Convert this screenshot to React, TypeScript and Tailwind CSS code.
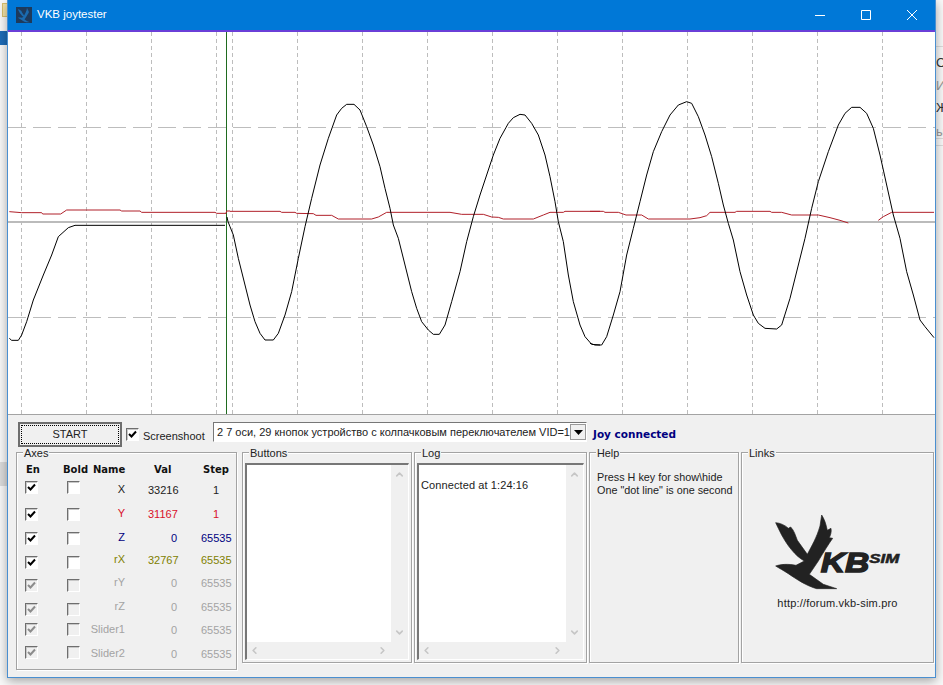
import { ChevronDown, ChevronLeft, ChevronRight, ChevronUp } from "lucide-react";
import type { ReactNode } from "react";

// points are read off 3x crops, so they carry the crop origin
const pts = (ox: number, oy: number, list: number[][]) =>
  list.map(([x, y]) => `${ox + x / 3},${oy + y / 3}`).join(" ");

const blackA = pts(0, 190, [[28, 445], [35, 451], [55, 451], [65, 435], [80, 395], [100, 330], [130, 255], [155, 195], [175, 140], [205, 113], [225, 106], [675, 106]]);
const blackB = pts(230, 95, [[-9, 366], [-6, 380], [0, 395], [10, 420], [25, 490], [45, 570], [60, 630], [75, 680], [90, 715], [105, 735], [130, 735], [145, 715], [165, 660], [185, 590], [205, 490], [225, 395], [245, 310], [270, 210], [295, 130], [320, 60], [335, 40], [350, 28], [372, 28], [390, 45], [410, 95], [430, 150], [450, 215], [465, 280], [480, 340], [490, 390], [505, 430], [525, 510], [545, 590], [560, 640], [575, 680], [595, 705], [610, 718], [628, 718], [645, 690], [665, 620], [690, 530], [710, 440], [730, 365], [750, 300], [770, 240], [790, 180], [810, 130], [835, 85], [850, 68], [870, 58], [885, 60], [905, 85], [925, 120], [945, 180], [960, 245], [975, 320], [985, 380], [1000, 440], [1015, 540], [1030, 620], [1050, 690], [1065, 725], [1085, 748], [1110, 750]]);
const blackC = pts(590, 95, [[0, 745], [15, 750], [35, 750], [50, 725], [70, 660], [90, 590], [110, 480], [130, 400], [150, 320], [170, 240], [190, 170], [215, 110], [240, 60], [265, 30], [290, 20], [305, 25], [325, 65], [345, 120], [365, 185], [385, 265], [400, 330], [415, 385], [430, 435], [450, 530], [470, 600], [490, 660], [505, 685], [525, 700], [560, 702], [575, 690], [600, 610], [625, 510], [645, 430], [665, 340], [685, 260], [715, 170], [745, 90], [765, 55], [785, 37], [810, 37], [830, 55], [850, 100], [870, 180], [890, 270], [910, 360], [930, 430], [950, 530], [970, 600], [990, 675], [1005, 695], [1032, 728]]);

const redA = pts(0, 190, [[28, 65], [65, 68], [125, 68], [128, 72], [182, 72], [200, 60], [360, 60], [365, 63], [420, 63], [425, 67], [645, 67], [650, 70], [678, 70], [680, 63], [690, 63]]);
const redB = pts(230, 95, [[0, 349], [150, 349], [155, 352], [195, 352], [200, 355], [250, 356], [258, 361], [305, 361], [325, 372], [425, 372], [445, 366], [470, 352], [660, 352], [695, 358], [760, 358], [785, 366], [805, 367], [820, 372], [910, 372], [940, 360], [960, 352], [1000, 352], [1005, 349], [1110, 349]]);
const redC = pts(590, 95, [[0, 349], [40, 349], [45, 352], [85, 352], [108, 360], [155, 360], [175, 372], [300, 372], [330, 368], [350, 362], [360, 352], [435, 352], [440, 349], [540, 349], [545, 352], [575, 352], [605, 360], [685, 360], [720, 368], [750, 376], [775, 384]]);
const redD = pts(590, 95, [[865, 376], [880, 365], [905, 352], [1032, 352]]);

const gridX = [21, 86, 151, 216, 232, 297, 362, 427, 492, 557, 622, 687, 752, 817, 882];

const birdPath =
  "M17,35 C30,36 45,42 55,52 L62,48 C72,58 76,72 82,88 L112,130 C125,105 140,80 150,45 L155,12 C160,20 165,30 168,42 L172,58 L183,52 C185,62 182,72 178,80 L188,82 C175,100 160,125 145,150 L118,190 L160,220 L200,233 L140,233 C110,225 80,205 55,188 C40,178 28,172 17,165 C30,160 55,158 78,163 L103,150 C75,135 50,100 35,72 C28,58 22,46 17,35 Z";

const Chart = () => (
  <svg className="block h-[382px] w-[927px] shrink-0 bg-white" viewBox="8 32 927 382" fill="none">
    {gridX.map((x) => (
      <line key={x} x1={x + 0.5} x2={x + 0.5} y1={32} y2={414} stroke="#bdbdbd" strokeDasharray="4 3" />
    ))}
    <line x1={8} x2={935} y1={127.5} y2={127.5} stroke="#bdbdbd" strokeDasharray="18 7" />
    <line x1={8} x2={935} y1={317.5} y2={317.5} stroke="#bdbdbd" strokeDasharray="18 7" />
    <line x1={8} x2={935} y1={222} y2={222} stroke="#bbb" strokeWidth={2} />
    <line x1={226.5} x2={226.5} y1={32} y2={414} stroke="#1f6b1f" />
    <polyline points={redA} stroke="#b0202a" />
    <polyline points={redB} stroke="#b0202a" />
    <polyline points={redC} stroke="#b0202a" />
    <polyline points={redD} stroke="#b0202a" />
    <polyline points={blackA} stroke="#000" strokeLinejoin="round" />
    <polyline points={blackB} stroke="#000" strokeLinejoin="round" />
    <polyline points={blackC} stroke="#000" strokeLinejoin="round" />
  </svg>
);

const Check = ({ on = false, dim = false }: { on?: boolean; dim?: boolean }) => (
  <span
    className={`block h-[13px] w-[13px] border border-t-[#6e6e6e] border-l-[#6e6e6e] border-r-white border-b-white shadow-[inset_1px_1px_0_#c8c8c8] ${dim ? "bg-[#f0f0f0]" : "bg-white"}`}
  >
    {on && (
      <svg viewBox="0 0 11 11" className="h-[11px] w-[11px]" fill="none">
        <path d="M2 5 L4.5 7.5 L9 2.5" stroke={dim ? "#8c8c8c" : "#000"} strokeWidth={2} />
      </svg>
    )}
  </span>
);

const Group = ({ title, className, children }: { title: string; className: string; children?: ReactNode }) => (
  <div className={`relative shrink-0 border border-[#a3a3a3] shadow-[inset_1px_1px_0_#fff,1px_1px_0_#fff] ${className}`}>
    <span className="absolute -top-[5px] left-[6px] bg-[#f0f0f0] px-px leading-[11px]">{title}</span>
    {children}
  </div>
);

const ListBox = ({ children }: { children?: ReactNode }) => (
  <div className="mx-[2px] mt-[10px] flex h-[197px] flex-col border-t-2 border-l-2 border-t-[#777] border-l-[#777] border-r border-b border-r-white border-b-white">
    <div className="flex min-h-0 flex-1">
      <div className="flex-1 bg-white pt-[12px] pl-[2px] tracking-[0.1px]">{children}</div>
      <div className="flex w-[17px] flex-col items-center justify-between py-[4px] text-[#c6c6c6]">
        <ChevronUp size={11} strokeWidth={3.5} />
        <ChevronDown size={11} strokeWidth={3.5} />
      </div>
    </div>
    <div className="flex h-[17px] items-center justify-between pr-[20px] pl-[2px] text-[#c6c6c6]">
      <ChevronLeft size={11} strokeWidth={3.5} />
      <ChevronRight size={11} strokeWidth={3.5} />
    </div>
  </div>
);

type Axis = { name: string; val: string; step: string; color: string; dim: boolean; row: string; box: string };

const axes: Axis[] = [
  { name: "X", val: "33216", step: "1", color: "text-[#222]", dim: false, row: "", box: "-translate-y-[3px]" },
  { name: "Y", val: "31167", step: "1", color: "text-[#d8102a]", dim: false, row: "mt-px", box: "" },
  { name: "Z", val: "0", step: "65535", color: "text-[#000080]", dim: false, row: "mt-px", box: "" },
  { name: "rX", val: "32767", step: "65535", color: "text-[#808000]", dim: false, row: "-mt-px", box: "translate-y-[2px]" },
  { name: "rY", val: "0", step: "65535", color: "text-[#a3a3a3]", dim: true, row: "", box: "translate-y-[2px]" },
  { name: "rZ", val: "0", step: "65535", color: "text-[#a3a3a3]", dim: true, row: "mt-px", box: "translate-y-[2px]" },
  { name: "Slider1", val: "0", step: "65535", color: "text-[#a3a3a3]", dim: true, row: "", box: "-translate-y-px" },
  { name: "Slider2", val: "0", step: "65535", color: "text-[#a3a3a3]", dim: true, row: "mt-px", box: "-translate-y-[2px]" },
];

const AxesBox = () => (
  <Group title="Axes" className="h-[218px] w-[221px] pt-[9px]">
    <div className="flex h-[14px] items-center font-['DejaVu_Sans'] text-[10px] font-bold text-[#111]">
      <span className="ml-[9px] w-[20px]">En</span>
      <span className="ml-[17px] w-[30px]">Bold</span>
      <span className="ml-[0px] w-[33px]">Name</span>
      <span className="ml-[28px] w-[23px]">Val</span>
      <span className="ml-[26px] w-[30px]">Step</span>
    </div>
    <div className="mt-[3px]">
      {axes.map((a) => (
        <div key={a.name} className={`flex h-[23px] items-center whitespace-nowrap ${a.color} ${a.row}`}>
          <span className={`flex w-[28px] justify-center ${a.box}`}><Check on dim={a.dim} /></span>
          <span className={`ml-[14px] flex w-[28px] justify-center ${a.box}`}><Check dim={a.dim} /></span>
          <span className="ml-[4px] flex w-[34px] justify-end -translate-y-px">{a.name}</span>
          <span className="ml-[23px] w-[29px] text-right">{a.val}</span>
          <span className="ml-[24px] w-[30px] text-center">{a.step}</span>
        </div>
      ))}
    </div>
  </Group>
);

const Logo = () => (
  <svg viewBox="0 0 405 255" className="h-[85px] w-[135px] shrink-0">
    <path d={birdPath} fill="#222" stroke="#222" strokeWidth={2} />
    <text x={152} y={183} fill="#222" stroke="#222" strokeWidth={4} fontFamily="Liberation Sans" fontWeight={700} fontStyle="italic" fontSize={82} textLength={146} lengthAdjust="spacingAndGlyphs">KB</text>
    <text x={298} y={155} fill="#222" stroke="#222" strokeWidth={1.5} fontFamily="Liberation Sans" fontWeight={700} fontStyle="italic" fontSize={36} textLength={90} lengthAdjust="spacingAndGlyphs">SIM</text>
  </svg>
);

const TitleBar = () => (
  <div className="flex h-[30px] shrink-0 items-center bg-[#0078d7] text-white">
    <svg viewBox="0 0 220 245" className="mr-[5px] ml-[8px] h-[16px] w-[16px] shrink-0 bg-[#1d3a5c]">
      <path d={birdPath} fill="#1a6bb0" />
    </svg>
    <span className="text-[11.5px]">VKB joytester</span>
    <div className="ml-auto flex">
      <span className="flex h-[30px] w-[46px] items-center justify-center">
        <svg viewBox="0 0 10 10" className="h-[10px] w-[10px]" stroke="#fff" fill="none"><path d="M0 5.5H10" /></svg>
      </span>
      <span className="flex h-[30px] w-[46px] items-center justify-center">
        <svg viewBox="0 0 10 10" className="h-[10px] w-[10px]" stroke="#fff" fill="none"><path d="M.5 .5H9.5V9.5H.5Z" /></svg>
      </span>
      <span className="flex h-[30px] w-[46px] items-center justify-center">
        <svg viewBox="0 0 10 10" className="h-[10px] w-[10px]" stroke="#fff" fill="none"><path d="M0 0L10 10M10 0L0 10" /></svg>
      </span>
    </div>
  </div>
);

const Backdrop = () => (
  <>
    <div className="absolute top-[3px] left-[2px] h-[14px] w-[6px] border border-[#d8c070] bg-[#f3e3a8]" />
    <div className="absolute top-[31px] left-0 h-[14px] w-[8px] bg-[#1e6cb8]" />
    <div className="absolute top-[462px] left-0 h-[24px] w-[8px] bg-[#dcdcdc]" />
    <div className="absolute top-[46px] left-[936px] h-px w-[7px] bg-[#dcdcdc]" />
    <div className="absolute top-[138px] left-[936px] h-px w-[7px] bg-[#dcdcdc]" />
    <div className="absolute top-[145px] left-[936px] h-px w-[7px] bg-[#dcdcdc]" />
    <span className="absolute top-[53px] left-[936px] text-[13px] text-[#333]">С</span>
    <span className="absolute top-[76px] left-[936px] text-[13px] text-[#999]">И</span>
    <span className="absolute top-[98px] left-[936px] text-[13px] text-[#333]">Ж</span>
    <span className="absolute top-[122px] left-[936px] text-[13px] text-[#999]">ыт</span>
  </>
);

export default function App() {
  return (
    <div className="relative h-[685px] w-[943px] overflow-hidden bg-[#f9f9f9] font-['Liberation_Sans',sans-serif] text-[11px] text-[#222]">
      <Backdrop />
      <div className="absolute top-0 left-[7px] flex h-[678px] w-[929px] flex-col border-x border-b border-[#4a8fd0] bg-[#f0f0f0] shadow-[0_3px_10px_rgba(0,0,0,0.35)]">
        <TitleBar />
        <div className="h-[2px] shrink-0 bg-[#6a3fd8]" />
        <Chart />
        <div className="flex-1 border-t border-[#a3a3a3] pl-[8px]">
          <div className="flex h-[37px] items-start pt-[7px]">
            <button className="ml-[2px] flex h-[25px] w-[104px] items-center justify-center border-2 border-[#6e6e6e] bg-[#f0f0f0] p-px">
              <span className="flex h-full w-full items-center justify-center border border-dotted border-black">START</span>
            </button>
            <span className="mt-[6px] ml-[4px]"><Check on /></span>
            <span className="mt-[6px] ml-[4px] w-[70px]">Screenshoot</span>
            <div className="flex h-[20px] w-[374px] items-center overflow-hidden border border-t-[#777] border-l-[#777] border-r-white border-b-white bg-white pl-[3px]">
              <span className="w-[353px] shrink-0 overflow-hidden whitespace-nowrap">2 7 оси, 29 кнопок устройство с колпачковым переключателем VID=1</span>
              <span className="flex h-[16px] w-[16px] shrink-0 items-center justify-center border border-[#999] bg-[#f0f0f0]">
                <svg viewBox="0 0 9 5" className="h-[5px] w-[9px]"><path d="M0 0H9L4.5 5Z" fill="#000" /></svg>
              </span>
            </div>
            <span className="mt-[5px] ml-[6px] font-['DejaVu_Sans'] text-[10.5px] font-bold text-[#000080]">Joy connected</span>
          </div>
          <div className="flex items-start">
            <AxesBox />
            <Group title="Buttons" className="ml-[5px] h-[211px] w-[170px]">
              <ListBox />
            </Group>
            <Group title="Log" className="ml-[2px] h-[211px] w-[173px]">
              <ListBox>Connected at 1:24:16</ListBox>
            </Group>
            <Group title="Help" className="ml-[2px] h-[211px] w-[150px] pt-[18px] pl-[7px] text-[10.8px] leading-[13px]">
              <p>Press H key for show\hide</p>
              <p>One "dot line" is one second</p>
            </Group>
            <Group title="Links" className="ml-[2px] flex h-[211px] w-[193px] flex-col items-center pt-[58px]">
              <Logo />
              <span className="mt-[-1px] tracking-[0.2px]">http://forum.vkb-sim.pro</span>
            </Group>
          </div>
        </div>
      </div>
    </div>
  );
}
